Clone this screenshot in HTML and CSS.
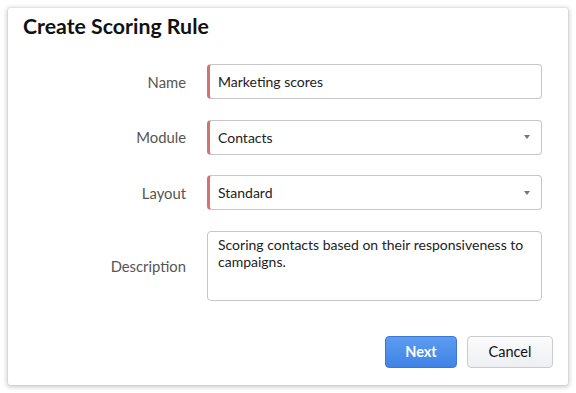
FILE: index.html
```html
<!DOCTYPE html>
<html>
<head>
<meta charset="utf-8">
<link rel="stylesheet" href="styles.css">
</head>
<body>
<div class="dialog">
  <h1 class="title">Create Scoring Rule</h1>
  <div class="form">
    <div class="label">Name</div>
    <div class="field required"><span class="value">Marketing scores</span></div>
    <div class="label">Module</div>
    <div class="field required select"><span class="value">Contacts</span><span class="caret"></span></div>
    <div class="label">Layout</div>
    <div class="field required select"><span class="value">Standard</span><span class="caret"></span></div>
    <div class="label">Description</div>
    <div class="field area"><span class="value">Scoring contacts based on their responsiveness to campaigns.</span></div>
  </div>
  <div class="actions">
    <button class="btn primary">Next</button>
    <button class="btn secondary">Cancel</button>
  </div>
</div>
</body>
</html>
```

FILE: styles.css
```css
html, body {
  margin: 0;
  padding: 0;
  background: #ffffff;
}
body {
  padding: 8px 8px 8px 8px;
  font-family: Lato, "Open Sans", sans-serif;
}
.dialog {
  width: 560px;
  height: 377px;
  box-sizing: border-box;
  background: #fff;
  border-radius: 2px;
  box-shadow: 0 1px 5px 1px rgba(0,0,0,0.22), 0 0 1px rgba(0,0,0,0.25);
  padding-top: 6px;
}
.title {
  margin: 0;
  padding-left: 15px;
  font-size: 21.3px;
  line-height: 25px;
  font-weight: 700;
  color: #111;
}
.form {
  margin-top: 25px;
  display: grid;
  grid-template-columns: 178px 335px;
  column-gap: 21px;
  row-gap: 20.5px;
  align-items: center;
}
.label {
  text-align: right;
  font-size: 14.8px;
  color: #555;
}
.field {
  height: 35px;
  box-sizing: border-box;
  border: 1px solid #c6c6c6;
  border-radius: 4px;
  display: flex;
  align-items: center;
  padding-left: 10px;
  padding-right: 11px;
  font-size: 14px;
  color: #222;
}
.field.required {
  border-left: 3px solid #d2736e;
  padding-left: 8px;
}
.value {
  flex: 1;
}
.caret {
  width: 0;
  height: 0;
  border-left: 3.5px solid transparent;
  border-right: 3.5px solid transparent;
  border-top: 4px solid #777;
}
.field.area {
  height: 70px;
  align-items: flex-start;
  padding-top: 4px;
  line-height: 17px;
}
.actions {
  margin-top: 35px;
  display: flex;
  justify-content: flex-end;
  gap: 10px;
  padding-right: 15px;
}
.btn {
  height: 32px;
  box-sizing: border-box;
  font-family: Lato, "Open Sans", sans-serif;
  font-size: 14.5px;
  border-radius: 4px;
  padding: 0;
}
.primary {
  width: 72px;
  background: linear-gradient(#5c9cf0, #3f83e6);
  border: 1px solid #3a78d4;
  color: #fff;
  font-weight: 700;
}
.secondary {
  width: 86px;
  background: linear-gradient(#fbfbfc, #eeeff2);
  border: 1px solid #c9cbd0;
  color: #111;
}
```
